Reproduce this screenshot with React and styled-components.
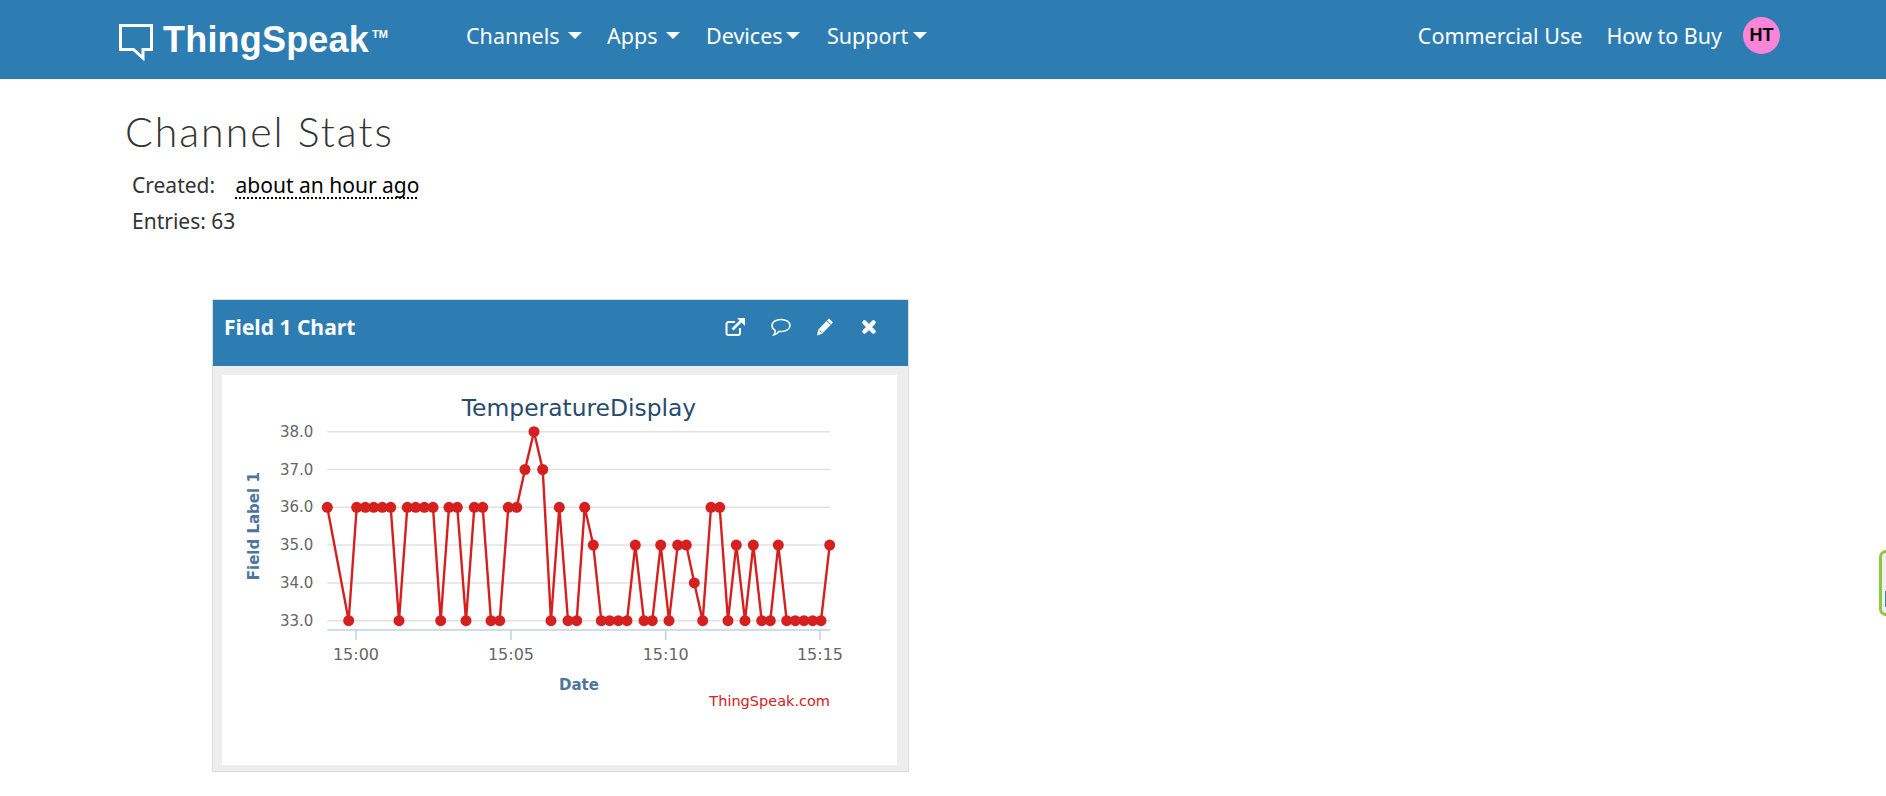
import React from 'react';
import styled, { createGlobalStyle } from 'styled-components';

const GlobalStyle = createGlobalStyle`
  html, body {
    margin: 0;
    padding: 0;
    background: #fff;
    overflow: hidden;
  }
  body {
    font-family: "Noto Sans", "Open Sans", sans-serif;
    color: #333;
  }
`;

const Navbar = styled.header`
  height: 79px;
  box-sizing: border-box;
  background: #2e7db2;
  display: flex;
  align-items: center;
  padding: 0 106px 8px 119px;
  color: #fff;
`;

const Logo = styled.div`
  display: flex;
  align-items: flex-start;
  width: 347px;
  gap: 10px;
  margin-top: 14px;
`;

const LogoText = styled.span`
  font-family: "Liberation Sans", Arial, sans-serif;
  font-weight: 700;
  font-size: 36px;
  line-height: 40px;
  letter-spacing: 0.2px;
  margin-top: -4px;
  display: flex;
`;

const Trademark = styled.sup`
  font-size: 11px;
  line-height: 11px;
  letter-spacing: 0;
  margin: 9px 0 0 3px;
`;

const NavLinks = styled.nav`
  display: flex;
  align-items: center;
`;

const NavItem = styled.a`
  display: flex;
  align-items: center;
  font-size: 21.5px;
  color: #fff;
  width: ${(p) => p.$w}px;
  gap: ${(p) => p.$gap}px;
`;

const Caret = styled.i`
  width: 0;
  height: 0;
  border-left: 7px solid transparent;
  border-right: 7px solid transparent;
  border-top: 7px solid #fff;
`;

const NavRight = styled.div`
  margin-left: auto;
  display: flex;
  align-items: center;
  gap: 24px;
`;

const Avatar = styled.div`
  width: 37px;
  height: 37px;
  margin-left: -3px;
  border-radius: 50%;
  background: #fb86d8;
  color: #000;
  font-family: "Liberation Sans", Arial, sans-serif;
  font-weight: 700;
  font-size: 18px;
  display: flex;
  align-items: center;
  justify-content: center;
`;

const Main = styled.main`
  padding: 28px 0 0 125px;
`;

const Title = styled.h1`
  margin: 0 0 10px;
  font-family: Lato, "Open Sans", sans-serif;
  font-weight: 300;
  font-size: 41px;
  line-height: 50px;
  letter-spacing: 2px;
  color: #333;
`;

const StatRow = styled.div`
  margin-left: 7px;
  font-size: 21px;
  line-height: 36px;
  color: #333;
`;

const TimeAgo = styled.span`
  margin-left: 15px;
  color: #000;
  text-decoration: underline dotted #000 2px;
  text-underline-offset: 4px;
  text-decoration-skip-ink: none;
`;

const Panel = styled.section`
  margin: 60px 0 0 87px;
  width: 695px;
  border: 1px solid #ddd;
  background: #eee;
`;

const PanelHead = styled.div`
  height: 66px;
  background: #2e7db2;
  color: #fff;
  display: flex;
  padding: 13px 0 0 11px;
  box-sizing: border-box;
`;

const PanelTitle = styled.h2`
  margin: 0;
  font-family: "Open Sans", sans-serif;
  font-weight: 700;
  font-size: 21px;
  line-height: 28px;
`;

const PanelTools = styled.div`
  margin-left: auto;
  padding: 4px 29px 0 0;
  display: flex;
  gap: 24px;
`;

const ToolIcon = styled.svg`
  width: 20px;
  height: 20px;
  display: block;
  overflow: visible;
`;

const PanelBody = styled.div`
  padding: 9px 11px 6px 9px;
`;

const ChartFrame = styled.div`
  height: 390px;
  background: #fff;
`;

const ChartSvg = styled.svg`
  width: 675px;
  height: 390px;
  display: block;
`;

const FeedbackTab = styled.div`
  position: fixed;
  right: 0;
  top: 550px;
  width: 4px;
  height: 60px;
  border: 3px solid #8cc63f;
  border-right: 0;
  border-radius: 8px 0 0 8px;
  background: #f0f0f0;
`;

const FeedbackMark = styled.i`
  position: absolute;
  right: 0;
  top: 38px;
  width: 1px;
  height: 16px;
  background: #2f8fa5;
`;

// sampled page x position of each point, with its temperature
const POINTS = [
  [327.3, 36], [348.7, 33], [356.7, 36], [365.3, 36], [373.7, 36], [382.3, 36], [390.7, 36],
  [399, 33], [407.3, 36], [415.7, 36], [424.3, 36], [433, 36], [440.7, 33], [449, 36],
  [457.3, 36], [466, 33], [474.3, 36], [482.7, 36], [491, 33], [499.7, 33], [508.3, 36],
  [516.7, 36], [525, 37], [534, 38], [542.7, 37], [551, 33], [559.3, 36], [568, 33],
  [576.7, 33], [584.7, 36], [593.3, 35], [601.3, 33], [609.7, 33], [618.3, 33], [627, 33],
  [635.3, 35], [644, 33], [652.3, 33], [660.7, 35], [669, 33], [677.7, 35], [686.3, 35],
  [694.3, 34], [702.7, 33], [711, 36], [719.7, 36], [728, 33], [736.3, 35], [745, 33],
  [753.3, 35], [761.7, 33], [770.3, 33], [778.3, 35], [786.7, 33], [795.3, 33], [804, 33],
  [812.7, 33], [821, 33], [829.7, 35],
];

// svg origin sits on the white frame's corner
const OX = 222;
const OY = 375;
const toX = (px) => px - OX;
const toY = (v) => 431.7 + (38 - v) * 37.8 - OY;
const LEFT = toX(327.3);
const RIGHT = toX(830);
const AXIS_Y = 630 - OY;
const TICKS = [
  [356, '15:00'],
  [511, '15:05'],
  [665.7, '15:10'],
  [820, '15:15'],
];
const CHART_FONT = '"DejaVu Sans", Verdana, sans-serif';

const Chart = () => {
  const line = POINTS.map(([x, v]) => `${toX(x)},${toY(v)}`).join(' ');
  return (
    <ChartSvg viewBox="0 0 675 390">
      <text x="357" y="41" textAnchor="middle" fontFamily={CHART_FONT} fontSize="23.4" fill="#274b6d">
        TemperatureDisplay
      </text>
      {[38, 37, 36, 35, 34, 33].map((v) => (
        <g key={v}>
          <line x1={LEFT} x2={RIGHT} y1={toY(v)} y2={toY(v)} stroke="#e2e2e2" strokeWidth="1.5" />
          <text x={LEFT - 14} y={toY(v) + 5} textAnchor="end" fontFamily={CHART_FONT} fontSize="15" fill="#666">
            {v.toFixed(1)}
          </text>
        </g>
      ))}
      <line x1={LEFT} x2={RIGHT} y1={AXIS_Y} y2={AXIS_Y} stroke="#c0d0e0" strokeWidth="1.5" />
      {TICKS.map(([x, label]) => (
        <g key={label}>
          <line x1={toX(x)} x2={toX(x)} y1={AXIS_Y} y2={AXIS_Y + 10} stroke="#c0d0e0" strokeWidth="1.5" />
          <text x={toX(x)} y={AXIS_Y + 30} textAnchor="middle" fontFamily={CHART_FONT} fontSize="16" fill="#666">
            {label}
          </text>
        </g>
      ))}
      <text
        transform={`translate(37 ${toY(35.5)}) rotate(-90)`}
        textAnchor="middle"
        fontFamily={CHART_FONT}
        fontSize="15"
        fontWeight="700"
        fill="#4d759e"
      >
        Field Label 1
      </text>
      <text x="357" y="315" textAnchor="middle" fontFamily={CHART_FONT} fontSize="15" fontWeight="700" fill="#4d759e">
        Date
      </text>
      <text x={RIGHT} y="331" textAnchor="end" fontFamily={CHART_FONT} fontSize="14.5" fill="#d62020">
        ThingSpeak.com
      </text>
      <polyline points={line} fill="none" stroke="#d62020" strokeWidth="2.4" />
      {POINTS.map(([x, v], i) => (
        <circle key={i} cx={toX(x)} cy={toY(v)} r="5.5" fill="#d62020" />
      ))}
    </ChartSvg>
  );
};

const LogoIcon = () => (
  <svg width="34" height="37" viewBox="0 0 34 37" fill="none">
    <path d="M1.5 1.500H32.500V25.500H24V34L14.500 25.500H1.500Z" stroke="#fff" strokeWidth="3" />
  </svg>
);

const App = () => (
  <>
    <GlobalStyle />
    <Navbar>
      <Logo>
        <LogoIcon />
        <LogoText>
          ThingSpeak<Trademark>TM</Trademark>
        </LogoText>
      </Logo>
      <NavLinks>
        <NavItem $w={141} $gap={9}>Channels<Caret /></NavItem>
        <NavItem $w={99} $gap={9}>Apps<Caret /></NavItem>
        <NavItem $w={121} $gap={3}>Devices<Caret /></NavItem>
        <NavItem $gap={5}>Support<Caret /></NavItem>
      </NavLinks>
      <NavRight>
        <NavItem>Commercial Use</NavItem>
        <NavItem>How to Buy</NavItem>
        <Avatar>HT</Avatar>
      </NavRight>
    </Navbar>
    <Main>
      <Title>Channel Stats</Title>
      <StatRow>
        Created: <TimeAgo>about an hour ago</TimeAgo>
      </StatRow>
      <StatRow>Entries: 63</StatRow>
      <Panel>
        <PanelHead>
          <PanelTitle>Field 1 Chart</PanelTitle>
          <PanelTools>
            <ToolIcon viewBox="2 0 20 20" fill="none" stroke="#fff" strokeWidth="2">
              <path d="M15 11V16A2 2 0 0 1 13 18H3.500A2 2 0 0 1 1.500 16V7A2 2 0 0 1 3.500 5H10" />
              <path d="M7.500 12.500L16 4" strokeWidth="2.600" />
              <path d="M12 1H20V9Z" fill="#fff" stroke="none" />
            </ToolIcon>
            <ToolIcon viewBox="0 0 20 20" fill="none" stroke="#fff" strokeWidth="1.500">
              <path d="M10 2.500C5 2.500 1 5 1 8.500C1 10.500 2.300 12.300 4.300 13.400C4.300 15 3.600 16.800 2.800 18C5 17.600 6.800 16.300 7.800 14.400C8.500 14.500 9.300 14.500 10 14.500C15 14.500 19 12 19 8.500C19 5 15 2.500 10 2.500Z" />
            </ToolIcon>
            <ToolIcon viewBox="0 0 20 20" fill="#fff">
              <path d="M14 1.500L18 5.500L7 16.800L2 18.500L3.200 12.700Z" />
              <path d="M4.500 13.500L6.500 15.500" stroke="#2e7db2" strokeWidth="1" />
              <path d="M11.800 3.700L15.800 7.700" stroke="#2e7db2" strokeWidth="1" />
            </ToolIcon>
            <ToolIcon viewBox="0 0 20 20" fill="none" stroke="#fff" strokeWidth="4.500" strokeLinecap="round">
              <path d="M5.500 5.500L14.500 14.500M14.500 5.500L5.500 14.500" />
            </ToolIcon>
          </PanelTools>
        </PanelHead>
        <PanelBody>
          <ChartFrame>
            <Chart />
          </ChartFrame>
        </PanelBody>
      </Panel>
    </Main>
    <FeedbackTab>
      <FeedbackMark />
    </FeedbackTab>
  </>
);

export default App;
